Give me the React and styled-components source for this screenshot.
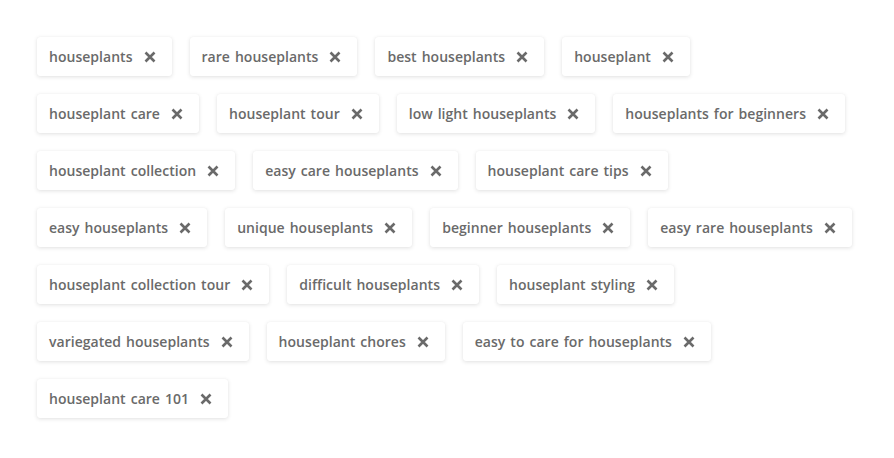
import React from "react";
import styled, { createGlobalStyle } from "styled-components";

const Global = createGlobalStyle`
  html, body { margin: 0; padding: 0; background: #ffffff; }
  body { font-family: "Open Sans", "Liberation Sans", sans-serif; }
`;

const Page = styled.div`
  padding: 37px 0 40px 37px;
  display: flex;
  flex-direction: column;
  gap: 18px;
`;

const Row = styled.ul`
  list-style: none;
  margin: 0;
  padding: 0;
  display: flex;
  gap: 18px;
`;

const Chip = styled.li`
  display: flex;
  align-items: center;
  height: 39px;
  box-sizing: border-box;
  padding: 0 16px 0 12px;
  background: #ffffff;
  border-radius: 3px;
  box-shadow: 0 1px 4px rgba(0, 0, 0, 0.12), 0 0 1px rgba(0, 0, 0, 0.06);
  font-size: 14px;
  font-weight: 600;
  color: #6a6a6a;
  line-height: 19px;
  letter-spacing: 0.03px;
  word-spacing: 1.3px;
  white-space: nowrap;
`;

const Remove = styled.button`
  margin-left: 11px;
  padding: 0;
  border: 0;
  background: none;
  width: 12px;
  height: 12px;
  display: flex;
  cursor: pointer;
`;

const rows = [
  ["houseplants", "rare houseplants", "best houseplants", "houseplant"],
  ["houseplant care", "houseplant tour", "low light houseplants", "houseplants for beginners"],
  ["houseplant collection", "easy care houseplants", "houseplant care tips"],
  ["easy houseplants", "unique houseplants", "beginner houseplants", "easy rare houseplants"],
  ["houseplant collection tour", "difficult houseplants", "houseplant styling"],
  ["variegated houseplants", "houseplant chores", "easy to care for houseplants"],
  ["houseplant care 101"],
];

const XIcon = () => (
  <svg width="12" height="12" viewBox="0 0 12 12">
    <path d="M1.5 1.5 L10.5 10.5 M10.5 1.5 L1.5 10.5" stroke="#6a6a6a" strokeWidth="2.6" strokeLinecap="butt" />
  </svg>
);

export default function App() {
  return (
    <>
      <Global />
      <Page>
        {rows.map((row, i) => (
          <Row key={i}>
            {row.map((t) => (
              <Chip key={t}>
                {t}
                <Remove aria-label={`remove ${t}`}><XIcon /></Remove>
              </Chip>
            ))}
          </Row>
        ))}
      </Page>
    </>
  );
}
